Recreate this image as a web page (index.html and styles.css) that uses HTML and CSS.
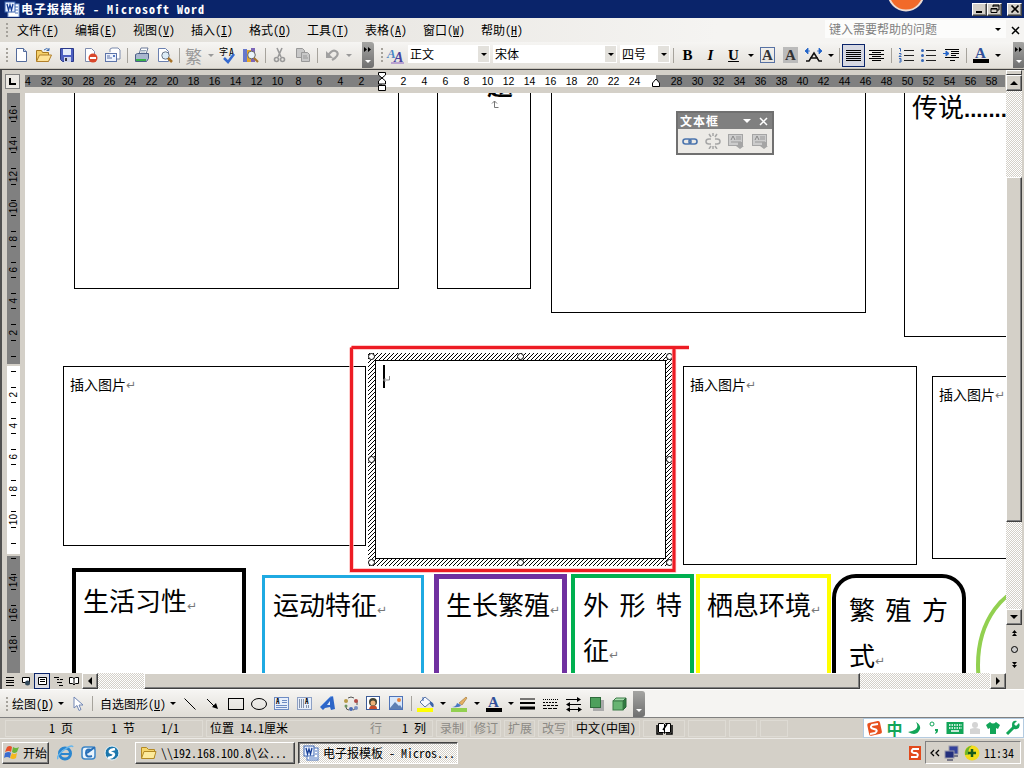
FILE: index.html
```html
<!DOCTYPE html>
<html lang="zh-CN">
<head>
    <meta charset="UTF-8">
    <title>电子报模板 - Microsoft Word</title>
    <link rel="stylesheet" href="styles.css">
</head>
<body>
    <div class="titlebar">
        <svg class="app-icon" width="16" height="16"><rect x="4" y="3" width="11" height="13" fill="#fff" stroke="#7d9fd8"/><path d="M8 6h6M8 9h6M11 12h3" stroke="#4a74c0"/><rect x="1" y="1" width="10" height="10" fill="#e8f0ff" stroke="#3a64b0"/><path d="M3 3l1.500 6L6 4l1.500 5L9 3" fill="none" stroke="#173f96" stroke-width="1.300"/></svg>
        <span class="title">电子报模板 - Microsoft Word</span>
        <svg class="orb" width="38" height="12"><circle cx="19" cy="-7" r="17.500" fill="#f26a2a" stroke="#ecdcd4" stroke-width="2"/></svg>
        <button class="win-btn"><svg width="12" height="10"><path d="M2 8h6" stroke="#000" stroke-width="2"/></svg></button>
        <button class="win-btn"><svg width="12" height="10"><path d="M4 1h6v5h-2M4 2h6M4 1v2M2 4.500h6v4h-6zM2 5h6" fill="none" stroke="#000"/></svg></button>
        <button class="win-btn last"><svg width="12" height="10"><path d="M2.500 1.500l7 7M9.500 1.500l-7 7" stroke="#000" stroke-width="1.700"/></svg></button>
    </div>

    <div class="menubar">
        <i class="grip"></i>
        <div class="menus">
            <span>文件(<u>F</u>)</span><span>编辑(<u>E</u>)</span><span>视图(<u>V</u>)</span><span>插入(<u>I</u>)</span><span>格式(<u>O</u>)</span><span>工具(<u>T</u>)</span><span>表格(<u>A</u>)</span><span>窗口(<u>W</u>)</span><span>帮助(<u>H</u>)</span>
        </div>
        <div class="ask"><span>键入需要帮助的问题</span><i class="tri"></i></div>
        <svg class="doc-close" width="9" height="9"><path d="M1 1l7 7M8 1l-7 7" stroke="#000" stroke-width="1.500"/></svg>
    </div>

    <div class="toolbar main-tools">
        <i class="grip"></i>
        <span class="tool"><svg width="16" height="16"><path d="M3.500 1.500h7l3 3v10h-10z" fill="#fff" stroke="#536a9a"/><path d="M10.500 1.500v3h3" fill="#c5d4f0" stroke="#536a9a"/></svg></span>
        <span class="tool"><svg width="18" height="16"><path d="M1.500 14V3.500h5l1 2h6V14z" fill="#f5d06a" stroke="#a8791e"/><path d="M1.500 14.500l3-6.500h12l-3 6.500z" fill="#ffe396" stroke="#b1802a"/><path d="M9 3q3-3 5 0m0-2v2.500h-2.500" fill="none" stroke="#3868b0"/></svg></span>
        <span class="tool"><svg width="16" height="16"><path d="M1.500 1.500h13v13h-11l-2-2z" fill="#4c5fc0" stroke="#2b3a8a"/><rect x="4" y="2" width="8" height="6" fill="#e4ecfa"/><rect x="5" y="10" width="7" height="5" fill="#cfd6ee"/><rect x="6" y="11" width="2" height="3" fill="#334"/></svg></span>
        <span class="tool"><svg width="16" height="16"><path d="M3.500 1.500h6l3 3v10h-9z" fill="#fff" stroke="#7d8bad"/><circle cx="11" cy="11" r="4.500" fill="#d9472b"/><rect x="8" y="10" width="6" height="2" fill="#fff"/></svg></span>
        <span class="tool"><svg width="18" height="16"><path d="M6 5V2l2-1h6l2 2v9h-3" fill="#fff" stroke="#7d8bad"/><rect x="1.500" y="6.500" width="11" height="8" fill="#edf2fc" stroke="#5c73a8"/><path d="M3 9h3M3 11h5" stroke="#5c73a8"/><path d="M9 8h2v2h-2z" fill="#577cc4"/></svg></span>
        <i class="sep"></i>
        <span class="tool"><svg width="16" height="16"><path d="M5 7l2-6h7l-2 6z" fill="#fff" stroke="#6d7b99"/><path d="M1.500 7.500l2-1h11v5l-2 3h-11z" fill="#a9b7cf" stroke="#4c5f86"/><path d="M2 12h10v2h-10z" fill="#37b24a"/><path d="M7 3.500h5M6.500 5h5" stroke="#9ab"/></svg></span>
        <span class="tool"><svg width="17" height="16"><path d="M2.500 1.500h7l3 3v10h-10z" fill="#fff" stroke="#6b80b0"/><circle cx="9.500" cy="8.500" r="3.700" fill="#dcecf7" stroke="#6a7687"/><path d="M12 11l4 4" stroke="#a8742a" stroke-width="2.500"/></svg></span>
        <i class="sep"></i>
        <span class="tool fan">繁</span>
        <span class="drop"><i class="tri gray"></i></span>
        <span class="tool"><svg width="18" height="17"><text x="0" y="8" font-size="9">字</text><text x="10" y="9" font-size="10">A</text><path d="M5 11l4 4 6-8" fill="none" stroke="#356ad0" stroke-width="2.500"/></svg></span>
        <span class="tool"><svg width="17" height="16"><path d="M1 2h4v13H1z" fill="#6878cc"/><path d="M5 3h4v12H5z" fill="#e4a72c"/><path d="M9 1h4v14H9z" fill="#7c66b8"/><circle cx="9.500" cy="8" r="3.800" fill="#eaf4fa" stroke="#666"/><path d="M12 11l4 4" stroke="#a8742a" stroke-width="2.200"/></svg></span>
        <i class="sep"></i>
        <span class="tool"><svg width="14" height="16" fill="none" stroke="#999" stroke-width="1.600"><path d="M4 1l4 9M9 1L5 10"/><circle cx="3.500" cy="12.500" r="2"/><circle cx="9.500" cy="12.500" r="2"/></svg></span>
        <span class="tool"><svg width="16" height="16" fill="#c8c8c8" stroke="#999"><path d="M1.500 1.500h6l2 2v7h-8z"/><path d="M6.500 5.500h6l2 2v7h-8z"/><path d="M8 9h4M8 11h5"/></svg></span>
        <i class="sep"></i>
        <span class="tool"><svg width="14" height="14"><path d="M3 7l3-3q3-3 6 0 2 3-2 6l-3 2" fill="none" stroke="#a0a0a0" stroke-width="2.200"/><path d="M1 3v7h7z" fill="#a0a0a0"/></svg></span>
        <span class="drop"><i class="tri gray"></i></span>
        <span class="overflow first"><svg width="8" height="5"><path d="M0 0l3 2.500L0 5zM4 0l3 2.500L4 5z"/></svg><i class="tri white"></i></span>

        <i class="grip second"></i>
        <span class="tool"><svg class="wide" width="20" height="17"><text class="serif" x="1" y="11" font-size="13" font-style="italic" font-weight="bold" fill="#4b87c4">A</text><text class="serif" x="8" y="15" font-size="14" font-style="italic" font-weight="bold" fill="#4545a0">A</text><path d="M5 16h13" stroke="#8b60c0"/></svg></span>
        <span class="combo style-box">正文<b><i class="tri"></i></b></span>
        <span class="combo font-box">宋体<b><i class="tri"></i></b></span>
        <span class="combo size-box">四号<b><i class="tri"></i></b></span>
        <i class="sep"></i>
        <span class="tool letter bold">B</span>
        <span class="tool letter italic">I</span>
        <span class="tool letter bold underline">U</span>
        <span class="drop"><i class="tri"></i></span>
        <span class="tool letter"><em class="boxed">A</em></span>
        <span class="tool letter"><em class="shaded">A</em></span>
        <span class="tool"><svg width="17" height="15"><path d="M1 13h3l5-8 5 8h3M5 10h8" fill="none" stroke="#111" stroke-width="1.500"/><path d="M0 3h5M3 0L0 3l3 3zM17 3h-5M14 0l3 3-3 3z" fill="#2464c8" stroke="#2464c8" stroke-width=".8"/></svg></span>
        <span class="drop"><i class="tri"></i></span>
        <i class="sep"></i>
        <span class="tool pressed"><svg width="15" height="13"><path d="M0 1.500h15M0 3.500h15M0 5.500h15M0 7.500h15M0 9.500h15M0 11.500h15" stroke="#000"/></svg></span>
        <span class="tool"><svg width="15" height="13"><path d="M0 1.500h15M3 3.500h9M0 5.500h15M3 7.500h9M0 9.500h15M3 11.500h9" stroke="#000"/></svg></span>
        <i class="sep"></i>
        <span class="tool"><svg width="16" height="16"><path d="M6 3.500h10M6 8.500h10M6 13.500h10" stroke="#222"/><path d="M1 1.500h1.500v3M1 6.500h2v1l-2 2h2.500M1 11.500h2v3.500h-2M1.500 13h1.500" fill="none" stroke="#3466b8"/></svg></span>
        <span class="tool"><svg width="15" height="16"><path d="M5 3.500h10M5 8.500h10M5 13.500h10" stroke="#222"/><circle cx="1.500" cy="3.500" r="1.500" fill="#3466b8"/><circle cx="1.500" cy="8.500" r="1.500" fill="#3466b8"/><circle cx="1.500" cy="13.500" r="1.500" fill="#3466b8"/></svg></span>
        <span class="tool"><svg width="17" height="14"><path d="M2 1.500h14M8 3.500h8M8 5.500h8M8 7.500h5M2 9.500h14M7 12.500h5" stroke="#000"/><path d="M0 5.500h4M3 3l3 2.500L3 8z" fill="#2464c8" stroke="#2464c8"/></svg></span>
        <i class="sep"></i>
        <span class="tool"><svg width="16" height="16"><text class="serif" x="2" y="11" font-size="15" font-weight="bold" fill="#31519a">A</text><rect y="12" width="16" height="4"/></svg></span>
        <span class="drop"><i class="tri"></i></span>
        <span class="overflow last"><svg width="8" height="5"><path d="M0 0l3 2.500L0 5zM4 0l3 2.500L4 5z"/></svg><i class="tri white"></i></span>
    </div>

    <div class="workspace">
        <div class="work-left">
            <div class="ruler-row">
                <span class="tab-type"><svg width="8" height="8"><path d="M1 0v6h6" fill="none" stroke="#000" stroke-width="2"/></svg></span>
                <div class="hruler">
                    <div class="hnums" id="hnums"></div>
                    <svg class="indent left" width="10" height="22"><path d="M1.500 1.500h7v2.500l-7 6v3h7v-3l-7-6zM1.500 14.500h7v5h-7z" fill="#fff" stroke="#000"/></svg>
                    <svg class="indent right" width="10" height="10"><path d="M1.500 8.500V5L5 1l3.500 4v3.500z" fill="#fff" stroke="#000"/></svg>
                </div>
            </div>
            <div class="doc-row">
                <div class="vruler" id="vruler"></div>
                <div class="canvas">
                    <div class="shape s1"></div>
                    <div class="shape s2"><span class="clipped">题</span><svg class="down" width="8" height="9"><path d="M3.500 1v6.500h4M1 3.500L3.500 1 6 3.500" fill="none" stroke="#777"/></svg></div>
                    <div class="shape s3"></div>
                    <div class="shape s4 big">传说<span class="dots">.......</span></div>
                    <div class="shape s5 small">插入图片<span class="mark">↵</span></div>
                    <div class="shape s6 small">插入图片<span class="mark">↵</span></div>
                    <div class="shape s7 small">插入图片<span class="mark">↵</span></div>
                    <div class="shape c1 big">生活习性<span class="mark">↵</span></div>
                    <div class="shape c2 big">运动特征<span class="mark">↵</span></div>
                    <div class="shape c3 big">生长繁殖<span class="mark">↵</span></div>
                    <div class="shape c4 big"><p><span>外</span><span>形</span><span>特</span></p>征<span class="mark">↵</span></div>
                    <div class="shape c5 big">栖息环境<span class="mark">↵</span></div>
                    <div class="shape c6 big"><p><span>繁</span><span>殖</span><span>方</span></p>式<span class="mark">↵</span></div>
                    <svg class="arc" width="31" height="90"><ellipse cx="60" cy="82" rx="57" ry="79" fill="none" stroke="#92d050" stroke-width="4"/></svg>

                    <!-- selected text box: hatched frame and handles -->
                    <svg class="selection" width="308" height="216">
                        <defs><pattern id="hatch" width="4" height="4" patternUnits="userSpaceOnUse"><rect width="4" height="4" fill="#fff"/><path d="M3 0h1v1h-1zM2 1h1v1h-1zM1 2h1v1h-1zM0 3h1v1h-1z" fill="#000" shape-rendering="crispEdges"/></pattern></defs>
                        <rect x="1" y="1" width="305" height="213" fill="url(#hatch)"/>
                        <rect x="8.500" y="8.500" width="290" height="198" fill="#fff" stroke="#000"/>
                        <g fill="#fff" stroke="#000"><circle cx="4.500" cy="4.500" r="3"/><circle cx="153.500" cy="4.500" r="3"/><circle cx="302.500" cy="4.500" r="3"/><circle cx="4.500" cy="107.500" r="3"/><circle cx="302.500" cy="107.500" r="3"/><circle cx="4.500" cy="210.500" r="3"/><circle cx="153.500" cy="210.500" r="3"/><circle cx="302.500" cy="210.500" r="3"/></g>
                        <rect x="16" y="13" width="2" height="23"/>
                        <path d="M22.500 24v4h-6M18.500 26l-2 2 2 2" fill="none" stroke="#888"/>
                    </svg>
                    <svg class="red-pen" width="342" height="230"><path d="M2.500 2.500V225.500H325V2.500M2.500 2.500H340" fill="none" stroke="#fbb" stroke-width="4.400"/><path d="M2.500 2.500V225.500H325V2.500M2.500 2.500H340" fill="none" stroke="#ed1c24" stroke-width="3"/></svg>

                    <div class="palette">
                        <div class="palette-title"><span>文本框</span><i class="tri white"></i><svg width="9" height="9"><path d="M1 1l7 7M8 1l-7 7" stroke="#fff" stroke-width="1.500"/></svg></div>
                        <div class="palette-tools">
                            <svg width="16" height="16"><g fill="none" stroke="#4c75ae" stroke-width="1.600"><rect x="1" y="6" width="8" height="5" rx="2.500"/><rect x="7" y="6" width="8" height="5" rx="2.500"/></g></svg>
                            <svg width="16" height="16"><g fill="none" stroke="#a6a6a6" stroke-width="1.500"><path d="M6 6H4q-3 0-3 2.500T4 11h2M10 6h2q3 0 3 2.500T12 11h-2M4 1l2 3M12 1l-2 3M8 0v3M4 16l2-3M12 16l-2-3M8 13v3"/></g></svg>
                            <svg width="17" height="17"><rect x=".5" y="1.500" width="14" height="11" fill="#ccc" stroke="#a5a5a5"/><path d="M8 4h5M8 6h5M3 9h10" stroke="#999"/><path d="M3 7l2-4 2 4" fill="none" stroke="#888"/><path d="M10 9h4v4h2l-4 3-4-3h2z" fill="#a5a5a5"/></svg>
                            <svg width="17" height="17"><rect x=".5" y="1.500" width="14" height="11" fill="#ccc" stroke="#a5a5a5"/><path d="M8 4h5M8 6h5M3 9h10" stroke="#999"/><path d="M3 7l2-4 2 4" fill="none" stroke="#888"/><path d="M10 9h4v4h2l-4 3-4-3h2z" fill="#a5a5a5"/></svg>
                        </div>
                    </div>
                </div>
            </div>
            <div class="hscroll">
                <span class="view"><svg width="9" height="9"><path d="M0 .5h8M0 3.500h8M0 5.500h8M0 8.500h8" stroke="#000"/></svg></span>
                <span class="view"><svg width="9" height="9"><path d="M.5.500h7v5h-7z" fill="#fff" stroke="#000"/><circle cx="5.500" cy="6" r="2.500" fill="#334a5c"/></svg></span>
                <span class="view on"><svg width="9" height="9"><path d="M.5.500h8v7h-8zM2 2.500h5M2 4.500h5" fill="#fff" stroke="#000"/></svg></span>
                <span class="view"><svg width="9" height="9"><path d="M0 .5h5M3 2.500h2M6 2.500h3M3 5.500h5M5 8.500h4" stroke="#000"/></svg></span>
                <span class="view"><svg width="10" height="9"><path d="M.5.500h3l1.500 1 1.500-1h3v6h-3L5 8 3.500 6.500h-3zM5 1v7" fill="#fff" stroke="#000"/></svg></span>
                <button class="scroll-btn"><i class="tri left"></i></button>
                <div class="htrack"><div class="hthumb"></div></div>
                <button class="scroll-btn"><i class="tri right"></i></button>
            </div>
        </div>
        <div class="vscroll">
            <i class="splitter"></i>
            <button class="scroll-btn"><i class="tri up"></i></button>
            <div class="vtrack"><div class="vthumb"></div></div>
            <button class="scroll-btn"><i class="tri down-arrow"></i></button>
            <div class="browse">
                <svg width="7" height="7"><path d="M3.500 0L6 3H1zM3.500 3L6 6H1z"/></svg>
                <svg width="7" height="7"><circle cx="3.500" cy="3.500" r="3" fill="#ccc" stroke="#000"/></svg>
                <svg width="7" height="7"><path d="M1 0h5L3.500 3zM1 3h5L3.500 6z"/></svg>
            </div>
        </div>
    </div>

    <div class="toolbar draw-tools">
        <i class="grip"></i>
        <span class="label">绘图(<u>D</u>)</span>
        <span class="drop"><i class="tri"></i></span>
        <span class="tool"><svg width="12" height="16"><path d="M2 1v11l3-2.500 2 5 2-1-2-4.500h4z" fill="#fff" stroke="#7086b4"/></svg></span>
        <i class="sep"></i>
        <span class="label auto">自选图形(<u>U</u>)</span>
        <span class="drop"><i class="tri"></i></span>
        <span class="tool"><svg width="12" height="12"><path d="M.5.500l11 11" stroke="#000"/></svg></span>
        <span class="tool"><svg width="12" height="12"><path d="M0 1l9 9" stroke="#000"/><path d="M11 11L5 9l4-4z"/></svg></span>
        <span class="tool"><svg width="16" height="12"><rect x=".5" y=".5" width="15" height="11" fill="none" stroke="#000"/></svg></span>
        <span class="tool"><svg width="16" height="12"><ellipse cx="8" cy="6" rx="7.500" ry="5.500" fill="none" stroke="#000"/></svg></span>
        <span class="tool"><svg width="15" height="13"><rect x=".5" y=".5" width="14" height="12" fill="#e8effb" stroke="#6e8cc4"/><text x="2" y="7" font-size="7" font-weight="bold">A</text><path d="M8 3.500h5M8 5.500h5M2 8.500h11M2 10.500h11" stroke="#6e8cc4"/></svg></span>
        <span class="tool"><svg width="15" height="13"><rect x=".5" y=".5" width="14" height="12" fill="#e8effb" stroke="#8da0c4"/><text x="8" y="7" font-size="7" font-weight="bold">A</text><path d="M2.500 2v9M4.500 2v9M6.500 2v9M9.500 8v3M11.500 8v3" stroke="#8593ac"/></svg></span>
        <span class="tool"><svg width="16" height="15"><path d="M0 11L10 1l3-1 2 13-4 1-1-3-5 1-2 2z" fill="#2d66c8"/><path d="M7 9l3-4v4z" fill="#dce9fb"/><path d="M0 11L10 1l3-1" fill="none" stroke="#7fa8e8"/></svg></span>
        <span class="tool"><svg width="16" height="16" fill="none" stroke="#555"><path d="M5 2q3-2 6 0M14 5v4M3 11q0 3 3 3M13 11q-1 3-3 3"/><circle cx="3" cy="5" r="2" fill="#b89b48" stroke="none"/><circle cx="13" cy="5" r="2" fill="#b14b45" stroke="none"/><circle cx="13" cy="12" r="2" fill="#7890c4" stroke="none"/><circle cx="8" cy="13" r="2" fill="#4c6cb4" stroke="none"/><circle cx="3" cy="10" r="1.500" fill="#6d9660" stroke="none"/></svg></span>
        <span class="tool"><svg width="15" height="15"><rect x=".5" y=".5" width="13" height="13" fill="#fff" stroke="#3c5c98"/><circle cx="7" cy="6" r="4" fill="#443"/><circle cx="7" cy="7" r="2.500" fill="#eeb27a"/><path d="M3 13q1-4 4-3 4-1 4 3z" fill="#c84c2c"/></svg></span>
        <span class="tool"><svg width="15" height="15"><rect x=".5" y=".5" width="13" height="13" fill="#d9e8fb" stroke="#4f74b8"/><circle cx="10" cy="4" r="2" fill="#e8823c"/><path d="M1 12l5-6 4 4 1-1 2 3v1H1z" fill="#5d7fb4"/></svg></span>
        <i class="sep"></i>
        <span class="tool"><svg width="17" height="16"><rect x="0" y="12" width="16" height="4" fill="#ff0"/><path d="M3 6l5-5 6 5-6 5z" fill="#f5f8ff" stroke="#5c77a8"/><path d="M6 5V1M14 6q3 1 2 5-2-1-3-4z" stroke="#3d64ac" fill="#3d64ac"/></svg></span>
        <span class="drop"><i class="tri"></i></span>
        <span class="tool"><svg width="17" height="16"><rect x="0" y="12" width="16" height="4" fill="#92d050"/><path d="M8 7l7-6 1 1-5 7z" fill="#e7b264" stroke="#9a7030" stroke-width=".6"/><path d="M1 11q4 0 5-4l4 2q-1 3-9 2z" fill="#4878c4"/></svg></span>
        <span class="drop"><i class="tri"></i></span>
        <span class="tool"><svg width="16" height="16"><text class="serif" x="2" y="11" font-size="15" font-weight="bold" fill="#31519a">A</text><rect y="12" width="16" height="4"/></svg></span>
        <span class="drop"><i class="tri"></i></span>
        <span class="tool"><svg width="15" height="12"><path d="M0 1h15" stroke="#000"/><path d="M0 5h15" stroke="#000" stroke-width="2"/><path d="M0 10h15" stroke="#000" stroke-width="3"/></svg></span>
        <span class="tool"><svg width="15" height="12"><path d="M0 1.500h15" stroke="#000" stroke-dasharray="1 1"/><path d="M0 4.500h15" stroke="#000" stroke-dasharray="2 1"/><path d="M0 7.500h15" stroke="#000" stroke-dasharray="3 1"/><path d="M0 10.500h15" stroke="#000" stroke-dasharray="4 1"/></svg></span>
        <span class="tool"><svg width="16" height="16"><path d="M0 3.500h13M3 8.500h12M3 13.500h10" stroke="#000"/><path d="M11 1l4 2.500L11 6zM4 6L0 8.500 4 11zM12 11l4 2.500-4 2.500zM4 11l-4 2.500L4 16z"/></svg></span>
        <span class="tool"><svg width="14" height="14"><rect x="3" y="3" width="11" height="11" fill="#aaa"/><rect x=".5" y=".5" width="10" height="10" fill="#4ea05c" stroke="#2f6c3c"/></svg></span>
        <span class="tool"><svg width="15" height="14"><path d="M1 4l3-3h10l-3 3z" fill="#a8dcae" stroke="#3c7c48"/><path d="M11 4l3-3v9l-3 3z" fill="#2f7c40" stroke="#2c6438"/><rect x="1" y="4" width="10" height="9" fill="#68b472" stroke="#3c7c48"/></svg></span>
        <span class="overflow draw"><i class="tri white"></i></span>
    </div>

    <div class="statusbar">
        <div class="pane pages"><span>1 页</span><span>1 节</span><span>1/1</span></div>
        <div class="pane pos"><span>位置 14.1厘米</span><span class="off">行</span><span>1 列</span></div>
        <div class="pane mode off">录制</div>
        <div class="pane mode off">修订</div>
        <div class="pane mode off">扩展</div>
        <div class="pane mode off">改写</div>
        <div class="pane lang">中文(中国)</div>
        <div class="pane book"><svg width="17" height="13"><path d="M2.500 1.500h5l1 1 1-1h5v9h-5l-1 1-1-1h-5zM8.500 2v9" fill="#fff" stroke="#000"/><path d="M1 3v9h6M16 3v9h-6M7 8l4-6" fill="none" stroke="#000" stroke-width="1.500"/></svg></div>
        <div class="pane blank"></div><div class="pane blank narrow"></div><div class="pane blank narrow"></div>
        <div class="ime">
            <svg width="17" height="17"><rect x="2" y="2" width="13" height="13" rx="2" fill="#e8501e" transform="rotate(-12 8 8)"/><path d="M12 4L6 5q-3 3 2 4 5 1 1 4l-5 1" fill="none" stroke="#fff" stroke-width="2"/></svg>
            <span>中</span>
            <svg width="16" height="16"><path d="M10 2q5 8-8 10 9 5 12-3 1-4-4-7z" fill="#12a558"/></svg>
            <svg width="16" height="16"><circle cx="6" cy="4" r="2" fill="none" stroke="#12a558"/><path d="M9 9h3v2q0 2-3 3l1-3H9z" fill="#12a558"/></svg>
            <svg width="18" height="16"><rect x=".5" y="2" width="17" height="12" fill="#12a558"/><path d="M3 5h13M3 8h13" stroke="#fff" stroke-width="1.500" stroke-dasharray="1.500 1"/><path d="M5 11h8" stroke="#fff" stroke-width="1.500"/></svg>
            <svg width="14" height="16"><circle cx="7" cy="5" r="3" fill="#d4d4d4"/><path d="M2 14V9q5-2 10 0v5z" fill="#d4d4d4"/></svg>
            <svg width="16" height="16"><path d="M5 2q3 3 6 0l4 3-2 4-2-1v6H5V8L3 9 1 5z" fill="#12a558"/></svg>
            <svg width="16" height="16"><path d="M2 14l7-7" stroke="#12a558" stroke-width="3"/><path d="M14 3l-3 3-2-2 3-3q-5-1-5 4 0 5 5 4 4-2 2-6z" fill="#12a558"/></svg>
        </div>
    </div>

    <div class="taskbar">
        <button class="start"><svg width="17" height="16"><path d="M3 2q3-2 5 0L7 7Q5 5 1 7z" fill="#e8502a"/><path d="M9 2q3 2 6 0l-2 5q-3 2-5 0z" fill="#6bb53a"/><path d="M1 8q4-2 6 0l-1 5q-3-2-6 0z" fill="#3a6cd0"/><path d="M8 8q2 2 5 0l-1 5q-3 2-6 0z" fill="#f5b820"/></svg>开始</button>
        <div class="quick">
            <svg width="17" height="16"><circle cx="8" cy="8.500" r="5.500" fill="none" stroke="#2b86cf" stroke-width="3"/><path d="M4 9h9" stroke="#2b86cf" stroke-width="2"/><path d="M1 14Q-1 11 7 5t9-3" fill="none" stroke="#65b6ed" stroke-width="1.500"/></svg>
            <svg width="16" height="16"><rect x="1" y="2" width="13" height="12" rx="3" fill="#eaf4fd" stroke="#3d85c6" stroke-width="1.500"/><path d="M11 5q-6-2-6 3t6 3M6 8l8-6" fill="none" stroke="#2a70b8" stroke-width="2"/></svg>
            <svg width="16" height="16"><circle cx="8" cy="8" r="7" fill="#1b76ac" stroke="#eef6fa"/><path d="M11 4L7 5q-3 2 1 3t0 4l-4 1" fill="none" stroke="#fff" stroke-width="2.500"/></svg>
        </div>
        <div class="task"><svg width="17" height="15"><path d="M1.500 13V2.500h5l2 2h6V13z" fill="#f6d66b" stroke="#b48a24"/><path d="M1.500 13.500L4 6.500h12l-2 7z" fill="#fdeb9c" stroke="#b48a24"/></svg>\\192.168.100.8\公...</div>
        <div class="task active"><svg width="16" height="16"><rect x="4" y="3" width="11" height="12" fill="#fff" stroke="#4a74c0"/><path d="M12 6h2M12 9h2M6 13h8" stroke="#4a74c0"/><rect x="1" y="1" width="10" height="10" fill="#e8f0ff" stroke="#3a64b0"/><path d="M3 3l1.500 6L6 4l1.500 5L9 3" fill="none" stroke="#173f96" stroke-width="1.300"/></svg>电子报模板 - Micros...</div>
        <svg class="sogou" width="12" height="14"><rect width="12" height="14" fill="#e24a1c"/><path d="M10 3H4q-3 3 1 4h2q3 1 1 4H2" fill="none" stroke="#fff" stroke-width="2"/></svg>
        <div class="tray">
            <svg width="10" height="8"><path d="M4 1L1 4l3 3M9 1L6 4l3 3" fill="none" stroke="#000" stroke-width="1.300"/></svg>
            <svg width="16" height="16"><rect x="5" y="1" width="9" height="8" fill="#34429c" stroke="#99a"/><rect x="1" y="6" width="9" height="7" fill="#232f7c" stroke="#99a"/><path d="M3 15h6M10 11h4" stroke="#778" stroke-width="2"/></svg>
            <svg width="16" height="16"><circle cx="8" cy="8" r="7.500" fill="#f2dc1c"/><path d="M1 10Q0 2 8 .5q-5 4-3 9z" fill="#6cb52c"/><path d="M8 4v8M4 8h8" stroke="#175a1c" stroke-width="2.500"/></svg>
            <span>11:34</span>
        </div>
    </div>

    <script>
        // horizontal ruler, one cell for every two characters
        const hnums = document.getElementById('hnums');
        for (let i = -34; i <= 58; i += 2) {
            const cell = document.createElement('span');
            cell.textContent = (i === 0 || i === 26) ? '' : (i === -34 ? '4' : Math.abs(i));
            hnums.appendChild(cell);
        }

        // vertical ruler
        const vruler = document.getElementById('vruler');
        for (let i = -16; i <= 18; i += 2) {
            const cell = document.createElement('span');
            const num = document.createElement('b');
            num.textContent = (i === 0 || i === 12) ? '' : Math.abs(i);
            cell.appendChild(num);
            vruler.appendChild(cell);
        }
    </script>
</body>
</html>
```
FILE: styles.css
```css
* {
    box-sizing: border-box;
}
body {
    margin: 0;
    width: 1024px;
    height: 768px;
    overflow: hidden;
    display: flex;
    flex-direction: column;
    background: #d4d0c8;
    color: #000;
    font: 12px/14px "Noto Sans CJK SC", sans-serif;
    font-feature-settings: "hwid";
    white-space: nowrap;
}
svg {
    display: block;
    flex: none;
}
button {
    font: inherit;
    font-feature-settings: inherit;
    padding: 0;
    border: 1px solid;
    border-color: #fff #404040 #404040 #fff;
    box-shadow: inset -1px -1px #808080;
    background: #d4d0c8;
    display: flex;
    align-items: center;
    justify-content: center;
    flex: none;
}
u {
    text-underline-offset: 1px;
}
.serif {
    font-family: "Liberation Serif", serif;
}
.tri {
    width: 0;
    height: 0;
    border: 3px solid transparent;
    border-top-color: #000;
    border-bottom: 0;
    flex: none;
}
.tri.gray {
    border-top-color: #999;
}
.tri.white {
    border-top-color: #fff;
}
.tri.up {
    border: 4px solid transparent;
    border-bottom-color: #000;
    border-top: 0;
}
.tri.down-arrow {
    border-width: 4px 4px 0;
}
.tri.left {
    border: 4px solid transparent;
    border-right-color: #000;
    border-left: 0;
}
.tri.right {
    border: 4px solid transparent;
    border-left-color: #000;
    border-right: 0;
}

/* title and menus */
.titlebar {
    height: 18px;
    flex: none;
    background: #0a246a;
    color: #fff;
    display: flex;
    align-items: center;
    padding-left: 4px;
}
.title {
    margin-left: 1px;
    width: 866px;
    font-weight: bold;
    letter-spacing: 1px;
}
.orb {
    align-self: flex-start;
    margin-left: 0;
    margin-right: 47px;
}
.win-btn {
    width: 15px;
    height: 13px;
}
.win-btn.last {
    margin-left: 5px;
}
.menubar {
    height: 24px;
    flex: none;
    display: flex;
    align-items: center;
    background: linear-gradient(90deg, #dedbd4, #f5f4f2 70%);
}
.grip {
    width: 3px;
    height: 14px;
    margin: 0 3px 0 6px;
    background: repeating-linear-gradient(#a5a29b 0 2px, transparent 2px 4px);
    background-size: 2px 100%;
    background-repeat: no-repeat;
    flex: none;
}
.menus {
    display: flex;
    gap: 16px;
    margin-left: 5px;
    width: 808px;
}
.menus span {
    width: 42px;
}
.ask {
    width: 181px;
    height: 18px;
    padding: 0 5px 0 4px;
    display: flex;
    align-items: center;
    justify-content: space-between;
    background: #fcfcfb;
    color: #808080;
    margin-bottom: 2px;
}
.doc-close {
    margin-left: 5px;
}

/* toolbars */
.toolbar {
    height: 27px;
    flex: none;
    display: flex;
    align-items: center;
    background: linear-gradient(#f6f5f3, #e3e0da);
}
.main-tools {
    border-bottom: 1px solid #c8c4bb;
}
.main-tools .grip {
    margin-right: 0;
}
.main-tools .grip.second {
    margin-left: 7px;
}
.tool {
    width: 23px;
    height: 23px;
    flex: none;
    display: flex;
    align-items: center;
    justify-content: center;
}
.tool.pressed {
    border: 1px solid #0a246a;
    background: #d6d8e2;
}
.drop {
    width: 11px;
    display: flex;
    justify-content: center;
    flex: none;
}
.sep {
    width: 1px;
    height: 15px;
    margin: 0 2px 0 3px;
    background: #a6a39c;
    flex: none;
}
.fan {
    font-size: 17px;
    line-height: 23px;
    color: #999;
}
.overflow {
    width: 12px;
    height: 26px;
    border-radius: 0 3px 3px 0;
    background: linear-gradient(#a5a5a3, #6f6f6f);
    display: flex;
    flex-direction: column;
    align-items: center;
    justify-content: space-between;
    padding: 5px 0;
    flex: none;
}
.overflow.first {
    margin-left: 8px;
}
.overflow.last {
    margin-left: 10px;
}
.overflow.draw {
    margin-left: 2px;
    justify-content: flex-end;
}
.combo {
    height: 18px;
    margin-bottom: 2px;
    padding: 0 1px 0 2px;
    background: #fff;
    line-height: 18px;
    display: flex;
    justify-content: space-between;
    align-items: center;
    flex: none;
}
.combo b {
    width: 11px;
    height: 16px;
    background: #e3e1dc;
    display: flex;
    align-items: center;
    justify-content: center;
}
.style-box {
    width: 82px;
    margin-left: 1px;
}
.font-box {
    width: 124px;
    margin-left: 3px;
}
.size-box {
    width: 50px;
    margin: 0 0 2px 3px;
}
.letter {
    font: 15px/16px "Liberation Serif", serif;
}
.bold {
    font-weight: bold;
}
.italic {
    font-style: italic;
    font-weight: bold;
}
.underline {
    text-decoration: underline;
}
.letter em {
    width: 15px;
    height: 16px;
    font-style: normal;
    font-weight: bold;
    text-align: center;
    color: #333;
}
.boxed {
    border: 1px solid #5872a4;
    line-height: 14px;
}
.shaded {
    background: #bbb;
}

/* work area */
.workspace {
    height: 621px;
    flex: none;
    display: flex;
    border-top: 1px solid #404040;
    border-bottom: 1px solid #fff;
}
.work-left {
    width: 1006px;
    border-left: 2px solid #505050;
}
.ruler-row {
    height: 23px;
    display: flex;
    align-items: center;
}
.tab-type {
    width: 15px;
    height: 15px;
    margin: 0 4px 0 3px;
    border: 1px solid #808080;
    background: #ece9e4;
    display: flex;
    align-items: center;
    justify-content: center;
    flex: none;
}
.hruler {
    position: relative;
    width: 980px;
    height: 12px;
    background: linear-gradient(90deg, #808080 357px, #fff 357px 631px, #808080 631px);
    margin-left: 1px;
    margin-bottom: 1px;
}
.hnums {
    display: flex;
    width: 980px;
}
.hnums span {
    width: 21px;
    flex: none;
    text-align: center;
    font: 10.5px/12px "Liberation Sans", sans-serif;
    font-feature-settings: normal;
}
.hnums span:first-child {
    width: 11px;
    text-align: left;
}
.indent {
    position: absolute;
}
.indent.left {
    left: 352px;
    top: -4px;
}
.indent.right {
    left: 626px;
    top: 3px;
}
.doc-row {
    height: 580px;
    display: flex;
}
.vruler {
    width: 13px;
    margin: 0 5px;
    padding-top: 6px;
    overflow: hidden;
    background: linear-gradient(#808080 271px, #d4d0c8 271px 273px, #fff 273px 461px, #d4d0c8 461px 463px, #808080 463px);
    flex: none;
}
.vruler span {
    height: 31.2px;
    padding: 7px 0 8px;
    display: flex;
    flex-direction: column;
    align-items: center;
    justify-content: space-between;
}
.vruler span::before,
.vruler span::after {
    content: "";
    width: 5px;
    height: 1px;
    background: #000;
}
.vruler b {
    writing-mode: vertical-rl;
    transform: rotate(180deg);
    font: 10px/12px "Liberation Sans", sans-serif;
    font-feature-settings: normal;
}
.canvas {
    position: relative;
    width: 981px;
    background: #fff;
    overflow: hidden;
    flex: none;
}

/* text boxes placed freely on the page */
.shape {
    position: absolute;
    border: 1px solid #000;
}
.small {
    font-size: 14px;
    line-height: 16px;
    padding: 9px 6px;
}
.big {
    font-size: 26px;
    line-height: 30px;
}
.big p {
    margin: 0 0 14px;
    width: 99px;
    display: flex;
    justify-content: space-between;
}
.mark {
    font: 12px/10px "DejaVu Sans", sans-serif;
    color: #777;
    vertical-align: 1px;
}
.s1 { left: 49px; top: -5px; width: 325px; height: 201px; }
.s2 { left: 412px; top: -5px; width: 94px; height: 201px; }
.s3 { left: 526px; top: -5px; width: 315px; height: 225px; }
.s4 { left: 879px; top: -5px; width: 140px; height: 249px; padding: 2px 7px; }
.s5 { left: 38px; top: 273px; width: 303px; height: 180px; }
.s6 { left: 658px; top: 273px; width: 234px; height: 199px; }
.s7 { left: 907px; top: 283px; width: 120px; height: 183px; }
.c1 { left: 47px; top: 475px; width: 174px; height: 120px; border-width: 4px; padding: 13px 7px; }
.c2 { left: 237px; top: 482px; width: 162px; height: 120px; border: 3px solid #1faae2; padding: 11px 8px; }
.c3 { left: 409px; top: 481px; width: 133px; height: 120px; border: 5px solid #7030a0; padding: 10px 7px; }
.c4 { left: 546px; top: 481px; width: 123px; height: 120px; border: 4px solid #00b050; padding: 11px 8px; }
.c5 { left: 671px; top: 481px; width: 135px; height: 120px; border: 4px solid #ff0; padding: 11px 7px; }
.c6 { left: 807px; top: 481px; width: 134px; height: 150px; border-width: 4px; border-radius: 24px; padding: 16px 13px; }
.c4 p {
    margin-bottom: 15px;
}
.c6 p {
    margin-bottom: 16px;
}
.dots {
    font: bold 22px/30px "Liberation Sans", sans-serif;
}
.clipped {
    position: absolute;
    left: 49px;
    top: -18px;
    font-size: 26px;
    line-height: 26px;
    font-weight: bold;
}
.down {
    position: absolute;
    left: 53px;
    top: 11px;
}
.arc {
    position: absolute;
    left: 950px;
    top: 490px;
}
.selection {
    position: absolute;
    left: 342px;
    top: 259px;
}
.red-pen {
    position: absolute;
    left: 324px;
    top: 252px;
}
.palette {
    position: absolute;
    left: 651px;
    top: 18px;
    width: 98px;
    height: 44px;
    border: 2px solid #707070;
    background: #eceae6;
}
.palette-title {
    height: 16px;
    padding: 0 3px 0 2px;
    display: flex;
    align-items: center;
    background: #808080;
    color: #fff;
    font-weight: bold;
    letter-spacing: 1px;
}
.palette-title span {
    width: 63px;
}
.palette-title .tri {
    border-width: 4px;
    border-bottom: 0;
    margin-right: 8px;
}
.palette-tools {
    display: flex;
    gap: 7px;
    padding: 4px;
}

/* scroll bars */
.scroll-btn {
    width: 16px;
    height: 16px;
}
.hscroll {
    height: 16px;
    display: flex;
}
.view {
    width: 16px;
    display: flex;
    align-items: center;
    justify-content: center;
}
.view.on {
    border: 1px solid #0a246a;
    background: #dcdde4;
}
.htrack,
.vtrack {
    background: repeating-conic-gradient(#fff 0 25%, #d4d0c8 0 50%) 0 0 / 2px 2px;
}
.htrack {
    flex: 1;
    padding-left: 46px;
}
.hthumb {
    width: 716px;
    height: 16px;
}
.hthumb,
.vthumb {
    background: #d4d0c8;
    border: 1px solid;
    border-color: #fff #404040 #404040 #fff;
    box-shadow: inset -1px -1px #808080;
}
.vscroll {
    width: 16px;
    display: flex;
    flex-direction: column;
}
.splitter {
    height: 5px;
    border: 1px solid;
    border-color: #fff #404040 #404040 #fff;
}
.vtrack {
    height: 518px;
    padding-top: 86px;
}
.vthumb {
    height: 345px;
}
.browse {
    flex: 1;
    display: flex;
    flex-direction: column;
    align-items: center;
    gap: 9px;
    padding-top: 5px;
}

/* drawing toolbar */
.draw-tools {
    background: linear-gradient(#f6f5f3, #e0ddd6) 0 0 / 634px 100% no-repeat #f5f4f2;
}
.label {
    width: 43px;
    flex: none;
}
.label.auto {
    width: 67px;
    margin-left: 5px;
}

/* status bar */
.statusbar {
    height: 22px;
    flex: none;
    display: flex;
    align-items: center;
    gap: 3px;
    padding-left: 5px;
    border-top: 1px solid #808080;
    border-bottom: 1px solid #eceae6;
}
.pane {
    height: 17px;
    display: flex;
    align-items: center;
    border: 1px solid #dedbd4;
    flex: none;
}
.pane span {
    flex: none;
}
.pages {
    width: 198px;
    padding-left: 43px;
}
.pages span {
    width: 62px;
}
.pages span + span {
    width: 50px;
}
.pages span:last-child {
    width: auto;
}
.pos {
    width: 227px;
    padding-left: 3px;
}
.pos span {
    width: 160px;
}
.pos span + span {
    width: 32px;
}
.pos span:last-child {
    width: auto;
}
.off {
    color: #8c8a85;
}
.mode {
    width: 31px;
    padding-left: 3px;
}
.lang {
    width: 68px;
    padding-left: 3px;
}
.book {
    width: 42px;
    justify-content: center;
}
.blank {
    width: 38px;
}
.blank.narrow {
    width: 28px;
}
.ime {
    width: 161px;
    height: 20px;
    margin-left: auto;
    border: 1px solid #b4cbe0;
    background: #fff;
    display: flex;
    align-items: center;
    justify-content: space-around;
    flex: none;
}
.ime span {
    font-size: 16px;
    font-weight: bold;
    color: #12a558;
}

/* taskbar */
.taskbar {
    height: 28px;
    flex: none;
    display: flex;
    align-items: center;
    padding: 0 3px 1px 2px;
}
.start {
    width: 47px;
    height: 22px;
    gap: 2px;
}
.quick {
    width: 85px;
    display: flex;
    gap: 7px;
    padding-left: 8px;
}
.task {
    width: 160px;
    height: 22px;
    margin: 0 3px 0 1px;
    padding-left: 4px;
    display: flex;
    align-items: center;
    gap: 4px;
    border: 1px solid;
    border-color: #fff #404040 #404040 #fff;
    box-shadow: inset -1px -1px #808080;
    flex: none;
}
.task.active {
    margin-left: 0;
    border-color: #404040 #fff #fff #404040;
    box-shadow: inset 1px 1px #808080;
    background: repeating-conic-gradient(#fff 0 25%, #d4d0c8 0 50%) 0 0 / 2px 2px;
}
.sogou {
    margin-left: auto;
    margin-right: 4px;
}
.tray {
    width: 96px;
    height: 23px;
    padding-left: 4px;
    display: flex;
    align-items: center;
    gap: 4px;
    border: 1px solid;
    border-color: #808080 #fff #fff #808080;
}
```
